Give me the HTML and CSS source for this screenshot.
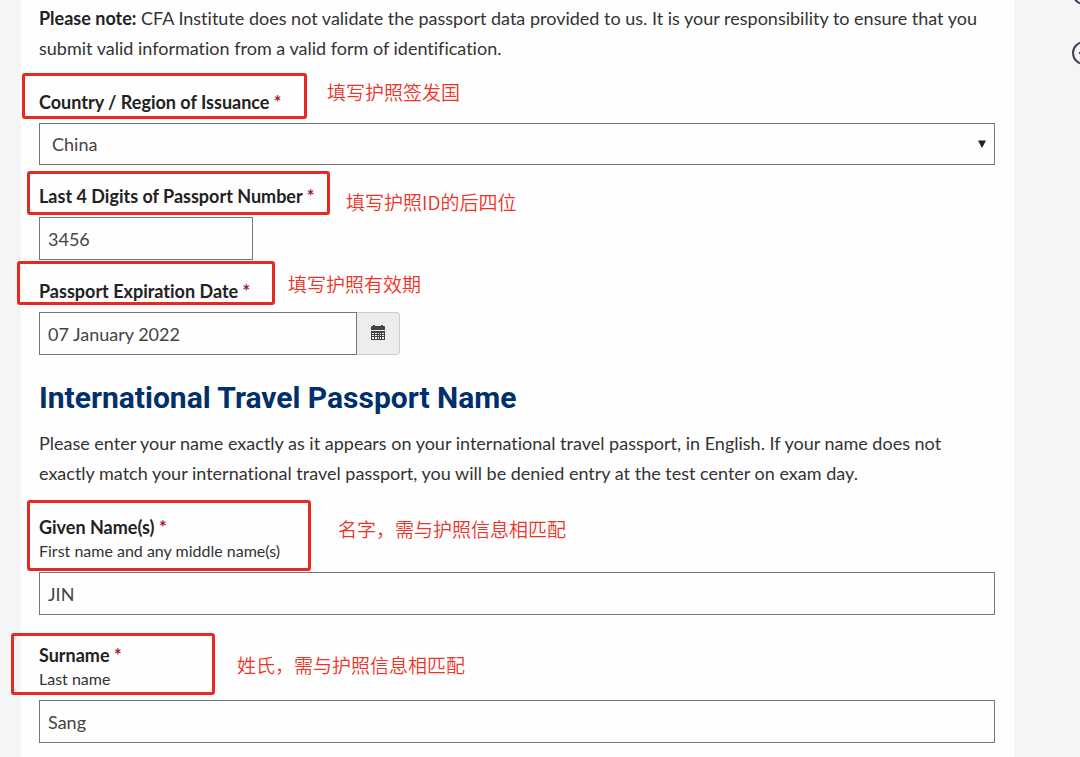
FILE: index.html
```html
<!DOCTYPE html>
<html lang="en">
<head>
<meta charset="utf-8">
<meta name="viewport" content="width=device-width, initial-scale=1">
<title>International Travel Passport</title>
<link rel="stylesheet" href="styles.css">
</head>
<body>
<div class="page">
  <main class="card">
    <form class="form">
      <p class="copy"><strong>Please note:</strong> CFA Institute does not validate the passport data provided to us. It is your responsibility to ensure that you submit valid information from a valid form of identification.</p>

      <div class="field field-country">
        <label class="label" for="country">Country / Region of Issuance <span class="required">*</span></label>
        <div class="select-wrap">
          <select class="control select" id="country"><option>China</option></select>
          <svg class="arrow" viewBox="0 0 8 8" aria-hidden="true"><path d="M0 0.5h8L4 8z"/></svg>
        </div>
        <span class="mark"></span>
        <span class="note" lang="zh">填写护照签发国</span>
      </div>

      <div class="field field-number">
        <label class="label" for="digits">Last 4 Digits of Passport Number <span class="required">*</span></label>
        <input class="control short" id="digits" type="text" value="3456">
        <span class="mark"></span>
        <span class="note" lang="zh">填写护照ID的后四位</span>
      </div>

      <div class="field field-expiry">
        <label class="label" for="expiry">Passport Expiration Date <span class="required">*</span></label>
        <div class="date-group">
          <input class="control" id="expiry" type="text" value="07 January 2022">
          <button class="calendar" type="button" aria-label="Choose date">
            <svg viewBox="0 0 14 15" aria-hidden="true">
              <path d="M1 1h1V0h2v1h6V0h2v1h1q1 0 1 1v3H0V2q0-1 1-1z"/>
              <path fill-rule="evenodd" d="M0 6h14v9H0zM1 8v1h2V8zM4 8v1h2V8zM7 8v1h1V8zM9 8v1h1V8zM11 8v1h2V8zM1 10v1h2v-1zM4 10v1h2v-1zM7 10v1h1v-1zM9 10v1h1v-1zM11 10v1h2v-1zM1 12v2h2v-2zM4 12v2h2v-2zM7 12v2h1v-2zM9 12v2h1v-2zM11 12v2h2v-2z"/>
            </svg>
          </button>
        </div>
        <span class="mark"></span>
        <span class="note" lang="zh">填写护照有效期</span>
      </div>

      <h2 class="heading">International Travel Passport Name</h2>
      <p class="copy">Please enter your name exactly as it appears on your international travel passport, in English. If your name does not exactly match your international travel passport, you will be denied entry at the test center on exam day.</p>

      <div class="field field-given">
        <label class="label" for="given">Given Name(s) <span class="required">*</span><span class="hint">First name and any middle name(s)</span></label>
        <input class="control" id="given" type="text" value="JIN">
        <span class="mark"></span>
        <span class="note" lang="zh">名字，需与护照信息相匹配</span>
      </div>

      <div class="field field-surname">
        <label class="label" for="surname">Surname <span class="required">*</span><span class="hint">Last name</span></label>
        <input class="control" id="surname" type="text" value="Sang">
        <span class="mark"></span>
        <span class="note" lang="zh">姓氏，需与护照信息相匹配</span>
      </div>
    </form>
  </main>
  <aside class="side">
    <button class="expand" type="button" aria-label="Expand previous section"><svg viewBox="0 0 24 24" aria-hidden="true"><circle cx="12" cy="12" r="11"/><path d="M7 12h10M12 7v10"/></svg></button>
    <button class="expand" type="button" aria-label="Expand section"><svg viewBox="0 0 24 24" aria-hidden="true"><circle cx="12" cy="12" r="11"/><path d="M7 12h10M12 7v10"/></svg></button>
  </aside>
</div>
</body>
</html>
```

FILE: styles.css
```css
* {
  box-sizing: border-box;
}

body {
  margin: 0;
  background: #f5f4f6;
  color: #333;
  font-family: Lato, "Noto Sans CJK SC", sans-serif;
  font-size: 18px;
  font-variant-ligatures: none;
}

.page {
  display: flex;
  min-height: 100vh;
  padding-left: 21px;
  overflow: hidden;
}

.card {
  flex: 1;
  min-width: 0;
  padding: 3px 19px 14px 18px;
  background: #fefefe;
}

.copy {
  margin: 0;
  line-height: 30px;
}

.copy strong {
  color: #222;
}

.heading {
  margin: 25px 0 12px;
  color: #002f6c;
  font-family: Roboto, sans-serif;
  font-size: 30px;
  font-weight: 700;
  line-height: 36px;
}

.field {
  position: relative;
  display: flex;
  flex-direction: column;
  gap: 9px;
  margin-top: 19px;
}

.field-country,
.field-given {
  margin-top: 27px;
}

.field-surname {
  margin-top: 28px;
}

.label {
  color: #222;
  font-weight: 700;
  line-height: 24px;
}

.required {
  color: #a6192e;
}

.hint {
  display: block;
  color: #333;
  font-size: 16px;
  font-weight: 400;
}

.control {
  width: 100%;
  height: 43px;
  padding: 0 8px;
  border: 1px solid #777;
  border-radius: 0;
  background: #fefefe;
  color: #444;
  font: inherit;
  font-variant-ligatures: none;
}

.short {
  width: 214px;
}

.select-wrap {
  position: relative;
}

.select {
  display: block;
  height: 42px;
  padding: 0 12px;
  appearance: none;
}

.arrow {
  position: absolute;
  top: 17px;
  right: 9px;
  width: 8px;
  height: 8px;
  fill: #222;
  pointer-events: none;
}

.date-group {
  display: flex;
  width: 361px;
}

.date-group .control {
  flex: 1;
  min-width: 0;
}

.calendar {
  display: flex;
  align-items: center;
  justify-content: center;
  width: 43px;
  padding: 0 0 3px;
  border: 1px solid #ccc;
  border-left: 0;
  border-radius: 0 4px 4px 0;
  background: #eeedee;
}

.calendar svg {
  width: 14px;
  height: 15px;
  fill: #444;
}

.mark {
  position: absolute;
  border: 3px solid #e8291f;
  border-radius: 3px;
  pointer-events: none;
}

.note {
  position: absolute;
  color: #ee3328;
  font-family: "Noto Sans CJK SC", sans-serif;
  font-size: 19px;
  font-weight: 350;
  line-height: 24px;
  white-space: nowrap;
}

.field-country .mark {
  top: -17px;
  left: -17px;
  width: 285px;
  height: 46px;
}

.field-country .note {
  top: -10px;
  left: 288px;
}

.field-number .mark {
  top: -13px;
  left: -12px;
  width: 303px;
  height: 44px;
}

.field-number .note {
  top: 6px;
  left: 307px;
}

.field-expiry .mark {
  top: -18px;
  left: -22px;
  width: 258px;
  height: 44px;
}

.field-expiry .note {
  top: -7px;
  left: 249px;
}

.field-given .mark {
  top: -15px;
  left: -12px;
  width: 284px;
  height: 71px;
}

.field-given .note {
  top: 2px;
  left: 299px;
}

.field-surname .mark {
  top: -10px;
  left: -28px;
  width: 204px;
  height: 62px;
}

.field-surname .note {
  top: 10px;
  left: 198px;
}

.side {
  display: flex;
  flex: none;
  flex-direction: column;
  gap: 36px;
  width: 66px;
  margin-top: -19px;
  padding-left: 58px;
}

.expand {
  width: 24px;
  height: 24px;
  padding: 0;
  border: 0;
  background: none;
}

.expand svg {
  display: block;
  fill: none;
  stroke: #3f4254;
  stroke-width: 2;
}
```
